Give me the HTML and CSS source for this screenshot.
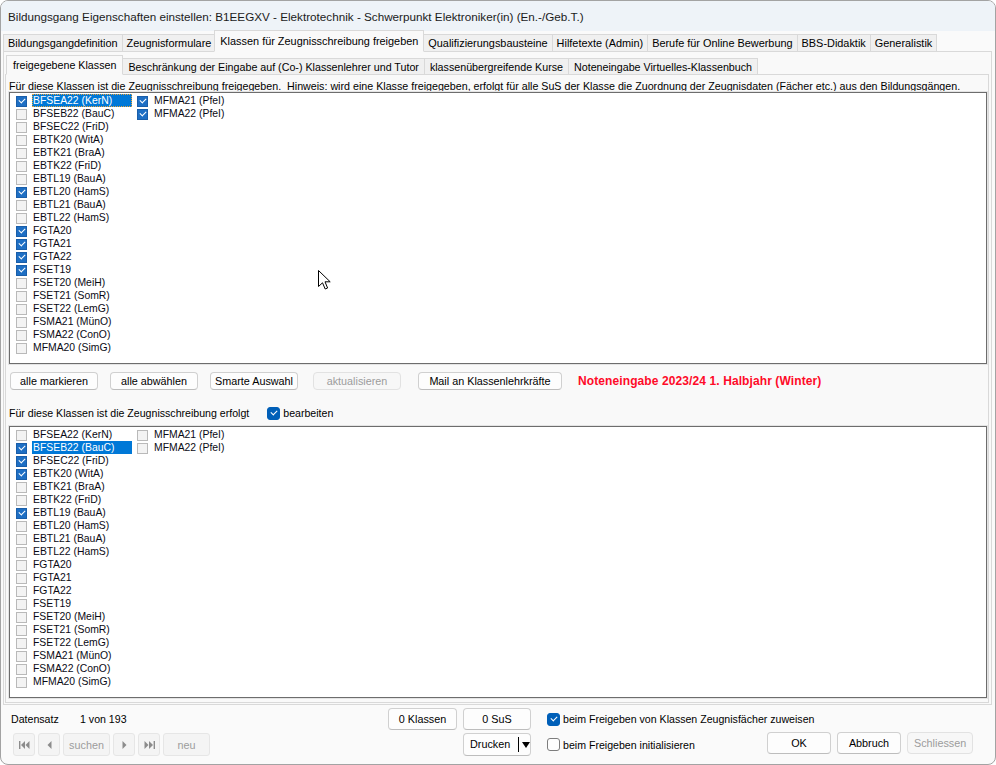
FILE: index.html
```html
<!DOCTYPE html>
<html lang="de">
<head>
    <meta charset="UTF-8">
    <title>Bildungsgang Eigenschaften einstellen</title>
    <link rel="stylesheet" href="styles.css">
</head>
<body>
    <div class="window">
        <div class="titlebar">Bildungsgang Eigenschaften einstellen: B1EEGXV - Elektrotechnik - Schwerpunkt Elektroniker(in) (En.-/Geb.T.)</div>

        <div class="tabs">
            <div class="tab">Bildungsgangdefinition</div>
            <div class="tab">Zeugnisformulare</div>
            <div class="tab active">Klassen für Zeugnisschreibung freigeben</div>
            <div class="tab">Qualifizierungsbausteine</div>
            <div class="tab">Hilfetexte (Admin)</div>
            <div class="tab">Berufe für Online Bewerbung</div>
            <div class="tab">BBS-Didaktik</div>
            <div class="tab">Generalistik</div>
        </div>

        <div class="tabpanel">
            <div class="tabs sub">
                <div class="tab active">freigegebene Klassen</div>
                <div class="tab">Beschränkung der Eingabe auf (Co-) Klassenlehrer und Tutor</div>
                <div class="tab">klassenübergreifende Kurse</div>
                <div class="tab">Noteneingabe Virtuelles-Klassenbuch</div>
            </div>

            <div class="subpanel">
                <div class="hint">Für diese Klassen ist die Zeugnisschreibung freigegeben.&nbsp; Hinweis: wird eine Klasse freigegeben, erfolgt für alle SuS der Klasse die Zuordnung der Zeugnisdaten (Fächer etc.) aus den Bildungsgängen.</div>

                <!-- freigegebene Klassen -->
                <div class="listbox focused">
                    <div class="col">
                        <div class="item on sel"><i class="cb"></i><span>BFSEA22 (KerN)</span></div>
                        <div class="item"><i class="cb"></i><span>BFSEB22 (BauC)</span></div>
                        <div class="item"><i class="cb"></i><span>BFSEC22 (FriD)</span></div>
                        <div class="item"><i class="cb"></i><span>EBTK20 (WitA)</span></div>
                        <div class="item"><i class="cb"></i><span>EBTK21 (BraA)</span></div>
                        <div class="item"><i class="cb"></i><span>EBTK22 (FriD)</span></div>
                        <div class="item"><i class="cb"></i><span>EBTL19 (BauA)</span></div>
                        <div class="item on"><i class="cb"></i><span>EBTL20 (HamS)</span></div>
                        <div class="item"><i class="cb"></i><span>EBTL21 (BauA)</span></div>
                        <div class="item"><i class="cb"></i><span>EBTL22 (HamS)</span></div>
                        <div class="item on"><i class="cb"></i><span>FGTA20</span></div>
                        <div class="item on"><i class="cb"></i><span>FGTA21</span></div>
                        <div class="item on"><i class="cb"></i><span>FGTA22</span></div>
                        <div class="item on"><i class="cb"></i><span>FSET19</span></div>
                        <div class="item"><i class="cb"></i><span>FSET20 (MeiH)</span></div>
                        <div class="item"><i class="cb"></i><span>FSET21 (SomR)</span></div>
                        <div class="item"><i class="cb"></i><span>FSET22 (LemG)</span></div>
                        <div class="item"><i class="cb"></i><span>FSMA21 (MünO)</span></div>
                        <div class="item"><i class="cb"></i><span>FSMA22 (ConO)</span></div>
                        <div class="item"><i class="cb"></i><span>MFMA20 (SimG)</span></div>
                    </div>
                    <div class="col">
                        <div class="item on"><i class="cb"></i><span>MFMA21 (PfeI)</span></div>
                        <div class="item on"><i class="cb"></i><span>MFMA22 (PfeI)</span></div>
                    </div>
                    <svg class="cursor" width="13" height="20" viewBox="0 0 13 20">
                        <path d="M0.5 0.5 L0.5 16.5 L4.5 12.8 L7.2 19 L9.6 18 L7 11.8 L12.2 11.8 Z" fill="#fff" stroke="#000" stroke-width="1" stroke-linejoin="round"/>
                    </svg>
                </div>

                <div class="btn-row">
                    <button class="btn">alle markieren</button>
                    <button class="btn">alle abwählen</button>
                    <button class="btn">Smarte Auswahl</button>
                    <button class="btn disabled">aktualisieren</button>
                    <button class="btn wide">Mail an Klassenlehrkräfte</button>
                    <span class="term">Noteneingabe 2023/24 1. Halbjahr (Winter)</span>
                </div>

                <div class="label-row">
                    <span>Für diese Klassen ist die Zeugnisschreibung erfolgt</span>
                    <label class="check on"><i class="box"></i>bearbeiten</label>
                </div>

                <!-- Zeugnisschreibung erfolgt -->
                <div class="listbox">
                    <div class="col">
                        <div class="item"><i class="cb"></i><span>BFSEA22 (KerN)</span></div>
                        <div class="item on sel"><i class="cb"></i><span>BFSEB22 (BauC)</span></div>
                        <div class="item on"><i class="cb"></i><span>BFSEC22 (FriD)</span></div>
                        <div class="item on"><i class="cb"></i><span>EBTK20 (WitA)</span></div>
                        <div class="item"><i class="cb"></i><span>EBTK21 (BraA)</span></div>
                        <div class="item"><i class="cb"></i><span>EBTK22 (FriD)</span></div>
                        <div class="item on"><i class="cb"></i><span>EBTL19 (BauA)</span></div>
                        <div class="item"><i class="cb"></i><span>EBTL20 (HamS)</span></div>
                        <div class="item"><i class="cb"></i><span>EBTL21 (BauA)</span></div>
                        <div class="item"><i class="cb"></i><span>EBTL22 (HamS)</span></div>
                        <div class="item"><i class="cb"></i><span>FGTA20</span></div>
                        <div class="item"><i class="cb"></i><span>FGTA21</span></div>
                        <div class="item"><i class="cb"></i><span>FGTA22</span></div>
                        <div class="item"><i class="cb"></i><span>FSET19</span></div>
                        <div class="item"><i class="cb"></i><span>FSET20 (MeiH)</span></div>
                        <div class="item"><i class="cb"></i><span>FSET21 (SomR)</span></div>
                        <div class="item"><i class="cb"></i><span>FSET22 (LemG)</span></div>
                        <div class="item"><i class="cb"></i><span>FSMA21 (MünO)</span></div>
                        <div class="item"><i class="cb"></i><span>FSMA22 (ConO)</span></div>
                        <div class="item"><i class="cb"></i><span>MFMA20 (SimG)</span></div>
                    </div>
                    <div class="col">
                        <div class="item"><i class="cb"></i><span>MFMA21 (PfeI)</span></div>
                        <div class="item"><i class="cb"></i><span>MFMA22 (PfeI)</span></div>
                    </div>
                </div>
            </div>
        </div>

        <div class="footer">
            <div class="nav-area">
                <div class="record"><span class="record-label">Datensatz</span><span>1 von 193</span></div>
                <div class="nav-btns">
                    <button class="btn disabled icon">
                        <svg width="11" height="8" viewBox="0 0 11 8"><rect x="0" y="0" width="1.4" height="8" fill="#8c8c8c"/><path d="M6 0 L2 4 L6 8 Z M10.5 0 L6.5 4 L10.5 8 Z" fill="#8c8c8c"/></svg>
                    </button>
                    <button class="btn disabled icon">
                        <svg width="5" height="8" viewBox="0 0 5 8"><path d="M4.5 0 L0.5 4 L4.5 8 Z" fill="#8c8c8c"/></svg>
                    </button>
                    <button class="btn disabled search">suchen</button>
                    <button class="btn disabled icon">
                        <svg width="5" height="8" viewBox="0 0 5 8"><path d="M0.5 0 L4.5 4 L0.5 8 Z" fill="#8c8c8c"/></svg>
                    </button>
                    <button class="btn disabled icon">
                        <svg width="11" height="8" viewBox="0 0 11 8"><path d="M0.5 0 L4.5 4 L0.5 8 Z M5 0 L9 4 L5 8 Z" fill="#8c8c8c"/><rect x="9.6" y="0" width="1.4" height="8" fill="#8c8c8c"/></svg>
                    </button>
                    <button class="btn disabled search">neu</button>
                </div>
            </div>

            <div class="print-area">
                <button class="btn">0 Klassen</button>
                <button class="btn">0 SuS</button>
                <span></span>
                <button class="btn split"><span class="split-text">Drucken</span><span class="split-arrow"></span></button>
            </div>

            <div class="opt-area">
                <label class="check on"><i class="box"></i>beim Freigeben von Klassen Zeugnisfächer zuweisen</label>
                <div class="opt-row">
                    <label class="check"><i class="box"></i>beim Freigeben initialisieren</label>
                    <div class="dialog-btns">
                        <button class="btn">OK</button>
                        <button class="btn">Abbruch</button>
                        <button class="btn disabled">Schliessen</button>
                    </div>
                </div>
            </div>
        </div>
    </div>
</body>
</html>
```

FILE: styles.css
```css
* {
    margin: 0;
    padding: 0;
    box-sizing: border-box;
}

body {
    width: 996px;
    height: 765px;
    overflow: hidden;
    background: #ffffff;
    font-family: "Liberation Sans", Arial, sans-serif;
    font-size: 10.6px;
    color: #000;
}

.window {
    width: 996px;
    height: 765px;
    border: 1px solid #a3a3a3;
    border-radius: 8px;
    background: #fafafa;
    display: flex;
    flex-direction: column;
    overflow: hidden;
}

.titlebar {
    height: 30px;
    flex: none;
    padding-left: 7px;
    display: flex;
    align-items: center;
    background: #eef3f8;
    font-size: 11.7px;
    color: #1b1b1b;
}

/* Registerkarten */
.tabs {
    height: 20px;
    flex: none;
    display: flex;
    align-items: flex-end;
    padding-left: 2px;
    position: relative;
    z-index: 1;
    font-size: 10.9px;
}

.tab {
    height: 18px;
    margin-bottom: -1px;
    padding: 0 4px;
    display: flex;
    align-items: center;
    background: #f0f0f0;
    border: 1px solid #d9d9d9;
    border-right: none;
    white-space: nowrap;
    color: #000;
}

.tab:last-child {
    border-right: 1px solid #d9d9d9;
}

.tab.active {
    height: 22px;
    padding: 0 5px;
    background: #f9f9f9;
    border: 1px solid #d9d9d9;
    border-bottom-color: #f9f9f9;
    margin-left: -1px;
    margin-right: -1px;
    position: relative;
    z-index: 2;
}

.tabs.sub {
    height: 19px;
    padding-left: 1px;
    font-size: 10.7px;
}

.tabs.sub .tab {
    height: 17px;
    padding: 0 5px;
}

.tabs.sub .tab.active {
    height: 20px;
    margin-left: 0;
    padding: 0 6px;
}

.tabpanel {
    flex: none;
    margin: 0 3px 0 2px;
    padding: 3px 2px 1px 1px;
    background: #f9f9f9;
    border: 1px solid #d9d9d9;
}

.subpanel {
    padding: 5px 1px 4px 3px;
    background: #f9f9f9;
    border: 1px solid #d9d9d9;
}

.hint {
    height: 12px;
    line-height: 12px;
    font-size: 10.7px;
    white-space: nowrap;
    overflow: hidden;
}

/* Listen mit Checkboxen */
.listbox {
    height: 272px;
    padding: 1px 6px 0;
    display: flex;
    background: #fff;
    border: 1px solid #6d6d6d;
    box-shadow: 0 0 0 1px #e4e4e4;
    position: relative;
    font-size: 10.4px;
    color: #0a0a14;
}

.col {
    width: 121px;
}

.item {
    height: 13px;
    line-height: 13px;
    display: flex;
    align-items: center;
    white-space: nowrap;
}

.cb {
    width: 11px;
    height: 11px;
    flex: none;
    margin-top: 2px;
    margin-right: 5px;
    background: #f3f3f3;
    border: 1px solid #b9b9b9;
    position: relative;
}

.item.on .cb {
    background: #1e6fc4;
    border-color: #1a5ea9;
}

.item.on .cb::after {
    content: '';
    position: absolute;
    left: 2px;
    top: 1px;
    width: 5px;
    height: 3px;
    border-left: 1px solid #fff;
    border-bottom: 1px solid #fff;
    transform: rotate(-45deg);
}

.item span {
    width: 100px;
    padding-left: 1px;
    height: 13px;
}

.item.sel span {
    background: #0078d7;
    color: #fff;
}

.listbox.focused .item.sel span {
    outline: 1px dotted #e8a33c;
    outline-offset: -1px;
}

.cursor {
    position: absolute;
    left: 308px;
    top: 177px;
}

/* Schaltflächen */
.btn {
    height: 18px;
    padding: 0 6px;
    font-family: inherit;
    font-size: 10.8px;
    color: #000;
    background: #fdfdfd;
    border: 1px solid #d0d0d0;
    border-bottom-color: #bdbdbd;
    border-radius: 4px;
    white-space: nowrap;
}

.btn.disabled {
    color: #9c9c9c;
    background: #f7f7f7;
    border-color: #e2e2e2;
}

.btn-row {
    margin-top: 8px;
    margin-left: 1px;
    display: flex;
    align-items: center;
}

.btn-row .btn {
    width: 88px;
    padding: 0;
    margin-right: 12px;
}

.btn-row .btn.disabled {
    margin-left: 3px;
    margin-right: 17px;
}

.btn-row .btn.wide {
    width: 144px;
    margin-right: 16px;
}

.term {
    font-size: 12px;
    letter-spacing: 0.1px;
    font-weight: bold;
    color: #ff0a28;
}

.label-row {
    height: 14px;
    margin-top: 16px;
    margin-bottom: 6px;
    display: flex;
    align-items: center;
}

.label-row .check {
    margin-left: 18px;
}

/* moderne Checkbox */
.check {
    display: flex;
    align-items: center;
    white-space: nowrap;
}

.check .box {
    width: 13px;
    height: 13px;
    margin-right: 3px;
    border: 1px solid #7d7d7d;
    border-radius: 3px;
    background: #fdfdfd;
    position: relative;
}

.check.on .box {
    background: #005fb8;
    border-color: #005fb8;
}

.check.on .box::after {
    content: '';
    position: absolute;
    left: 3px;
    top: 2px;
    width: 5px;
    height: 3px;
    border-left: 1px solid #fff;
    border-bottom: 1px solid #fff;
    transform: rotate(-45deg);
}

/* Fußzeile */
.footer {
    flex: 1;
    padding: 3px 0 0 9px;
    display: flex;
}

.nav-area {
    width: 378px;
    display: flex;
    flex-direction: column;
    gap: 3px;
}

.record {
    height: 22px;
    display: flex;
    align-items: center;
    padding-left: 1px;
}

.record-label {
    width: 69px;
}

.nav-btns {
    display: flex;
    gap: 3px;
    margin-left: 3px;
}

.nav-btns .btn {
    height: 23px;
    border-radius: 3px;
    border-color: #e6e6e6;
    background: #f4f4f4;
}

.nav-btns .icon {
    width: 22px;
    padding: 0;
    display: flex;
    align-items: center;
    justify-content: center;
}

.nav-btns .search {
    width: 47px;
    padding: 0;
}

.print-area {
    display: grid;
    grid-template-columns: 69px 68px;
    grid-template-rows: 22px 23px;
    gap: 3px 6px;
}

.print-area .btn {
    height: 100%;
}

.split {
    display: flex;
    align-items: center;
    padding: 0 0 0 6px;
}

.split-text {
    flex: 1;
    text-align: left;
    padding-right: 8px;
    border-right: 1px solid #000;
    line-height: 15px;
}

.split-arrow {
    width: 0;
    height: 0;
    margin: 0 6px 0 3px;
    border-left: 4px solid transparent;
    border-right: 4px solid transparent;
    border-top: 6px solid #000;
}

.opt-area {
    flex: 1;
    margin-left: 16px;
    padding-right: 22px;
    display: flex;
    flex-direction: column;
    gap: 3px;
}

.opt-area > .check {
    height: 22px;
}

.opt-row {
    height: 23px;
    display: flex;
    align-items: center;
}

.dialog-btns {
    margin-left: auto;
    margin-top: -4px;
    display: flex;
    gap: 6px;
}

.dialog-btns .btn {
    width: 64px;
    height: 22px;
}

.dialog-btns .btn.disabled {
    width: 66px;
}
```
